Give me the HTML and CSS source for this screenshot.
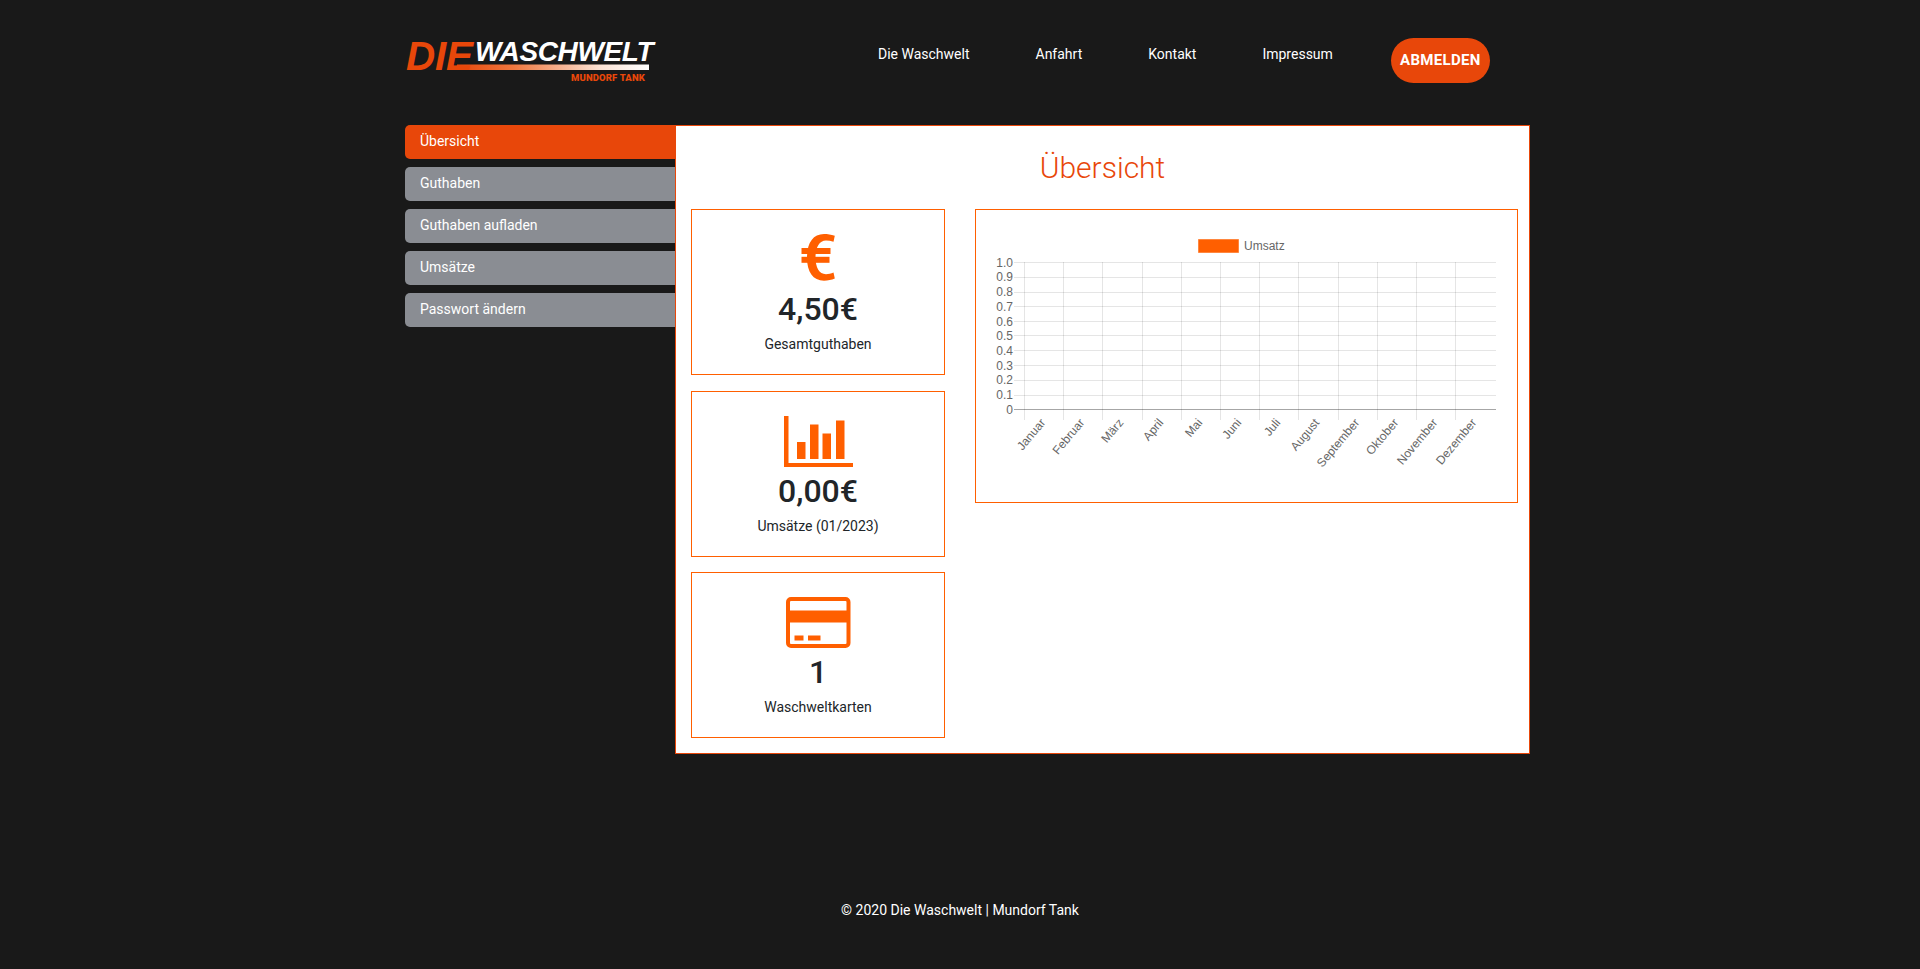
FILE: index.html
```html
<!DOCTYPE html>
<html lang="de">
<head>
<meta charset="utf-8">
<title>Die Waschwelt – Übersicht</title>
<link rel="stylesheet" href="styles.css">
</head>
<body>
<div class="wrap">
  <header class="top">
    <a class="logo" href="#" aria-label="Die Waschwelt">
      <svg width="252" height="52" viewBox="0 0 252 52">
        <defs>
          <linearGradient id="logoBar" x1="0" x2="1" y1="0" y2="0">
            <stop offset="0" stop-color="#e8470a"/>
            <stop offset="0.3" stop-color="#f0783f"/>
            <stop offset="0.75" stop-color="#fbe3d5"/>
            <stop offset="1" stop-color="#ffffff"/>
          </linearGradient>
        </defs>
        <polygon points="52,32.500 244,32.500 244,38 51,38" fill="url(#logoBar)"/>
        <text class="logo-die" x="1" y="38">DIE</text>
        <text class="logo-wasch" x="70" y="28.500">WASCHWELT</text>
        <text class="logo-tank" x="166" y="49">MUNDORF TANK</text>
      </svg>
    </a>
    <nav class="nav">
      <a href="#">Die Waschwelt</a>
      <a href="#">Anfahrt</a>
      <a href="#">Kontakt</a>
      <a href="#">Impressum</a>
    </nav>
    <a class="logout" href="#">ABMELDEN</a>
  </header>

  <main class="main">
    <aside class="side">
      <a class="side-item active" href="#">Übersicht</a>
      <a class="side-item" href="#">Guthaben</a>
      <a class="side-item" href="#">Guthaben aufladen</a>
      <a class="side-item" href="#">Umsätze</a>
      <a class="side-item" href="#">Passwort ändern</a>
    </aside>
    <section class="panel">
      <h1 class="title">Übersicht</h1>
      <div class="grid">
        <div class="cards">
          <div class="card">
            <svg class="icon" width="69" height="51" viewBox="0 0 69 51">
              <path class="fill" d="M50.800 1.800C47 0.600 43.500 0 40 0C29 0 23 9 23 23.500C23 38 29 46.700 40 46.700C44 46.700 47.500 45.800 50.800 44.500L49.500 38.600C47 39.600 44.500 40.200 42 40.200C35 40.200 31.500 33 31.500 23.500C31.500 14 35 6.500 42 6.500C44.500 6.500 47 7 49.500 7.800Z"/>
              <rect class="fill" x="17.500" y="14" width="29" height="6"/>
              <rect class="fill" x="17.500" y="22.800" width="28" height="6"/>
            </svg>
            <div class="value">4,50€</div>
            <div class="label">Gesamtguthaben</div>
          </div>
          <div class="card">
            <svg class="icon" width="69" height="51" viewBox="0 0 69 51">
              <path class="fill" d="M0 0H4.500V47H69V51H0Z"/>
              <rect class="fill" x="13" y="26" width="8.500" height="17"/>
              <rect class="fill" x="26" y="8.500" width="8.500" height="34.500"/>
              <rect class="fill" x="38.500" y="17.500" width="8.500" height="25.500"/>
              <rect class="fill" x="52" y="4.500" width="8.500" height="38.500"/>
            </svg>
            <div class="value">0,00€</div>
            <div class="label">Umsätze (01/2023)</div>
          </div>
          <div class="card">
            <svg class="icon" width="65" height="51" viewBox="0 0 65 51">
              <rect class="card-outline" x="2" y="2" width="60.500" height="47" rx="3"/>
              <rect class="fill" x="2" y="13.500" width="60" height="12"/>
              <rect class="fill" x="8.500" y="38.500" width="9" height="5"/>
              <rect class="fill" x="22" y="38.500" width="12.500" height="5"/>
            </svg>
            <div class="value">1</div>
            <div class="label">Waschweltkarten</div>
          </div>
        </div>
        <div class="chart-box">
          <svg class="chart" width="541" height="292" viewBox="0 0 541 292" role="img" aria-label="Umsatz">
            <rect class="legend-box" x="222.500" y="29.500" width="40" height="13"/>
            <text class="chart-text" x="268" y="40">Umsatz</text>
            <g class="grid-lines">
              <path d="M38 52.500H520M38 67.500H520M38 82.500H520M38 96.500H520M38 111.500H520M38 125.500H520M38 140.500H520M38 155.500H520M38 170.500H520M38 185.500H520"/>
              <path d="M48.500 52V210M87.500 52V210M126.500 52V210M166.500 52V210M205.500 52V210M244.500 52V210M283.500 52V210M322.500 52V210M362.500 52V210M401.500 52V210M440.500 52V210M479.500 52V210"/>
            </g>
            <path class="zero-line" d="M38 199.500H520"/>
            <g class="chart-text y-axis">
              <text x="37" y="56.500">1.0</text>
              <text x="37" y="71">0.9</text>
              <text x="37" y="86">0.8</text>
              <text x="37" y="100.500">0.7</text>
              <text x="37" y="115.500">0.6</text>
              <text x="37" y="130">0.5</text>
              <text x="37" y="144.500">0.4</text>
              <text x="37" y="159.500">0.3</text>
              <text x="37" y="174">0.2</text>
              <text x="37" y="189">0.1</text>
              <text x="37" y="203.500">0</text>
            </g>
            <g class="chart-text x-axis">
              <text transform="translate(70 213) rotate(-50)">Januar</text>
              <text transform="translate(109 213) rotate(-50)">Februar</text>
              <text transform="translate(148 213) rotate(-50)">März</text>
              <text transform="translate(188 213) rotate(-50)">April</text>
              <text transform="translate(227 213) rotate(-50)">Mai</text>
              <text transform="translate(266 213) rotate(-50)">Juni</text>
              <text transform="translate(305 213) rotate(-50)">Juli</text>
              <text transform="translate(344 213) rotate(-50)">August</text>
              <text transform="translate(384 213) rotate(-50)">September</text>
              <text transform="translate(423 213) rotate(-50)">Oktober</text>
              <text transform="translate(462 213) rotate(-50)">November</text>
              <text transform="translate(501 213) rotate(-50)">Dezember</text>
            </g>
          </svg>
        </div>
      </div>
    </section>
  </main>

  <footer class="foot">© 2020 Die Waschwelt | Mundorf Tank</footer>
</div>
</body>
</html>
```

FILE: styles.css
```css
* { box-sizing: border-box; }

html, body { margin: 0; }

body {
  background: #191919;
  color: #212529;
  font-family: Roboto, "Liberation Sans", sans-serif;
  font-size: 14px;
  line-height: 21px;
}

a { color: inherit; text-decoration: none; }

.wrap { width: 1140px; margin: 0 auto; }

/* Header */
.top {
  display: flex;
  align-items: flex-start;
  height: 125px;
  padding: 32px 0 0 15px;
}

.logo { display: block; width: 252px; height: 52px; }
.logo svg { display: block; }
.logo-die { fill: #e8470a; font: italic 700 40.500px "Liberation Sans", sans-serif; letter-spacing: -0.200px; }
.logo-wasch { fill: #fff; font: italic 700 28px "Liberation Sans", sans-serif; letter-spacing: -0.350px; }
.logo-tank { fill: #e8470a; font: 900 9.500px Roboto, sans-serif; letter-spacing: 0.150px; }

.nav {
  display: flex;
  gap: 66px;
  margin-left: 221px;
  padding-top: 12px;
  color: #fff;
}

.logout {
  display: flex;
  align-items: center;
  justify-content: center;
  width: 99px;
  height: 45px;
  margin: 6px 0 0 58px;
  border-radius: 22.500px;
  background: #e8470a;
  color: #fff;
  font-size: 15px;
  font-weight: 700;
  letter-spacing: 0.300px;
}

/* Layout */
.main { display: flex; align-items: flex-start; }

.side {
  display: flex;
  flex-direction: column;
  gap: 8px;
  width: 285px;
  padding-left: 15px;
}

.side-item {
  display: block;
  height: 34px;
  padding: 6px 15px;
  border-radius: 5px 0 0 5px;
  background: #8a8d93;
  color: #fff;
}

.side-item.active { background: #e8470a; }

.panel {
  width: 855px;
  height: 629px;
  padding-top: 24px;
  border: 1px solid #e8470a;
  background: #fff;
}

.title {
  margin: 0 0 23px;
  color: #e8470a;
  font-size: 30px;
  font-weight: 300;
  line-height: 36px;
  text-align: center;
}

/* Cards */
.grid {
  display: grid;
  grid-template-columns: 254px 543px;
  column-gap: 30px;
  align-items: start;
  padding-left: 15px;
}

.cards { display: flex; flex-direction: column; gap: 15.500px; }

.card {
  display: flex;
  flex-direction: column;
  align-items: center;
  height: 166px;
  padding-top: 24px;
  border: 1px solid #ff5f00;
}

.icon { display: block; flex: none; }
.fill { fill: #ff5f00; }
.card-outline { fill: none; stroke: #ff5f00; stroke-width: 4; }

.value {
  margin-top: 3px;
  font-size: 32px;
  font-weight: 500;
  line-height: 42px;
}

.label { margin-top: 4px; }

/* Chart */
.chart-box { height: 294px; border: 1px solid #ff5f00; }
.chart { display: block; }

.legend-box { fill: #ff5f00; stroke: rgba(255, 95, 0, 0.5); stroke-width: 1; }
.grid-lines path { fill: none; stroke: rgba(0, 0, 0, 0.1); stroke-width: 1; }
.zero-line { fill: none; stroke: rgba(0, 0, 0, 0.35); stroke-width: 1; }

.chart-text,
.chart-text text {
  fill: #666;
  font-family: "Liberation Sans", Arial, sans-serif;
  font-size: 12px;
}

.y-axis text { text-anchor: end; }
.x-axis text { text-anchor: end; }

/* Footer */
.foot {
  margin-top: 146px;
  color: #fff;
  text-align: center;
}
```
